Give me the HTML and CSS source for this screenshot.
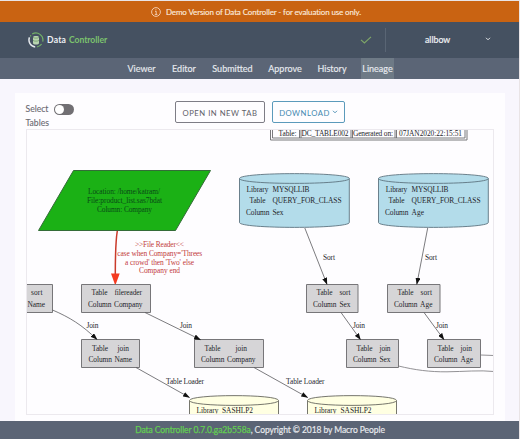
FILE: index.html
```html
<!DOCTYPE html>
<html lang="en">
<head>
<meta charset="utf-8">
<title>Data Controller</title>
<link rel="stylesheet" href="styles.css">
</head>
<body>
<div class="app">
  <div class="banner">
    <svg class="info" viewBox="0 0 10 10"><circle cx="5" cy="5" r="4.4"/><path d="M4 4.3h1.2v3M3.8 7.4h2.6M4.900 2.300v.9"/></svg>
    <span>Demo Version of Data Controller - for evaluation use only.</span>
  </div>
  <header class="header">
    <div class="brand">
      <svg class="logo" viewBox="0 0 16 16">
        <path class="ring-green" d="M4.2 2.1A7 7 0 0 1 14.7 9.7M8.9 15A7 7 0 0 0 13.6 12"/>
        <path class="ring-white" d="M1.5 5.4A7 7 0 0 0 7.2 15"/>
        <path class="ring-green" d="M2.3 4.4A7 7 0 0 1 3 3.4"/>
        <path class="db" d="M5 5.2c0-1.700 6-1.700 6 0v6c0 1.700-6 1.700-6 0z"/>
        <path class="db-lines" d="M5 5.4c1 1 5 1 6 0M5 8.4c1 1 5 1 6 0"/>
      </svg>
      <span class="brand-data">Data</span><span class="brand-ctrl">Controller</span>
    </div>
    <svg class="check" viewBox="0 0 12 8"><path d="M1 3.8 4.4 7 11 .8"/></svg>
    <div class="user"><span>allbow</span><svg class="chev" viewBox="0 0 6 4"><path d="m1 .8 2 2 2-2"/></svg></div>
  </header>
  <nav class="nav">
    <a>Viewer</a><a>Editor</a><a>Submitted</a><a>Approve</a><a>History</a><a class="active">Lineage</a>
  </nav>
  <main class="main">
    <section class="card">
      <div class="toolbar">
        <div class="select"><span class="select-label">Select Tables</span><span class="toggle"></span></div>
        <button class="btn">OPEN IN NEW TAB</button>
        <button class="btn btn-blue">DOWNLOAD<svg class="chev" viewBox="0 0 6 4"><path d="m1 .8 2 2 2-2"/></svg></button>
      </div>
      <div class="graph">
        <svg viewBox="27 130 468 284" width="468" height="284">
          <defs>
            <marker id="arrow" viewBox="0 0 7 5" refX="6.5" refY="2.5" markerWidth="7" markerHeight="5" markerUnits="userSpaceOnUse" orient="auto"><path d="M0 0 7 2.5 0 5z"/></marker>
          </defs>
          <g class="legend">
            <path d="M270.500 128V140H467V128M272.500 128V138H465V128"/>
            <path d="M299.500 128V138M301 128V138M351 128V138M352.500 128V138M395 128V138M396.500 128V138"/>
          </g>
          <text x="278.500" y="135.500" textLength="18">Table:</text>
          <text x="301.500" y="135.500" textLength="47">DC_TABLE002</text>
          <text x="353" y="135.500" textLength="40">Generated on:</text>
          <text x="399" y="135.500" textLength="63">07JAN2020:22:15:51</text>

          <path class="file" d="M73.500 170.500H210.500L175.500 230.500H38.500z"/>
          <g class="mid on-green">
            <text x="124" y="194.300" textLength="72">Location: /home/katram/</text>
            <text x="124.500" y="203.300" textLength="75">File:product_list.sas7bdat</text>
            <text x="124.500" y="212" textLength="55">Column: Company</text>
          </g>
          <path class="red-edge" d="M117.300 231C115.300 243 115.300 260 115.300 275"/>
          <path class="red-head" d="M111 273.500H119.700L115.300 285.500z"/>
          <g class="mid red">
            <text x="159.500" y="247" textLength="49">&gt;&gt;File Reader&lt;&lt;</text>
            <text x="159.700" y="255.700" textLength="85">case when Company='Threes</text>
            <text x="159.500" y="264.500" textLength="69">a crowd' then 'Two' else</text>
            <text x="159.500" y="273.200" textLength="41">Company end</text>
          </g>

          <g class="cyl">
            <path d="M239.500 178.500C239.500 172 349.300 172 349.300 178.500V222.500C349.300 229 239.500 229 239.500 222.500z"/>
            <path d="M239.500 178.500C239.500 185 349.300 185 349.300 178.500"/>
            <path d="M378.500 178.500C378.500 172 488.300 172 488.300 178.500V222.500C488.300 229 378.500 229 378.500 222.500z"/>
            <path d="M378.500 178.500C378.500 185 488.300 185 488.300 178.500"/>
          </g>
          <text x="246.500" y="192" textLength="22">Library</text><text x="272.500" y="192" textLength="37">MYSQLLIB</text>
          <text x="249.500" y="203.300" textLength="16">Table</text><text x="272.500" y="203.300" textLength="69">QUERY_FOR_CLASS</text>
          <text x="246" y="214.700" textLength="23.500">Column</text><text x="272.500" y="214.700" textLength="11">Sex</text>
          <text x="385.800" y="192" textLength="21.500">Library</text><text x="411.500" y="192" textLength="37">MYSQLLIB</text>
          <text x="388.500" y="203.300" textLength="16">Table</text><text x="411.500" y="203.300" textLength="69">QUERY_FOR_CLASS</text>
          <text x="385" y="214.700" textLength="23.500">Column</text><text x="411.500" y="214.700" textLength="12.500">Age</text>

          <g class="box">
            <path d="M20 284.500H52.500V312.500H20zM81.500 284.500H150.500V312.500H81.500zM306.500 284.500H358V312.500H306.500zM387.500 284.500H440V312.500H387.500z"/>
            <path d="M81.500 339.500H139.500V367.500H81.500zM194.500 339.500H263.500V367.500H194.500zM346.500 339.500H398.500V367.500H346.500zM427.500 339.500H480.500V367.500H427.500z"/>
          </g>
          <text x="31" y="295.300" textLength="11.500">sort</text><text x="27.500" y="306.500" textLength="17.500">Name</text>
          <text x="91.500" y="295.300" textLength="16">Table</text><text x="114.500" y="295.300" textLength="27.500">filereader</text>
          <text x="88" y="306.500" textLength="23.500">Column</text><text x="114" y="306.500" textLength="28.500">Company</text>
          <text x="316.500" y="295.300" textLength="16">Table</text><text x="339.500" y="295.300" textLength="11">sort</text>
          <text x="313" y="306.500" textLength="23.500">Column</text><text x="339.500" y="306.500" textLength="11">Sex</text>
          <text x="397.500" y="295.300" textLength="16">Table</text><text x="420.500" y="295.300" textLength="11.500">sort</text>
          <text x="394" y="306.500" textLength="23.500">Column</text><text x="420" y="306.500" textLength="12.500">Age</text>

          <text x="92" y="350.500" textLength="16">Table</text><text x="117.500" y="350.500" textLength="11.500">join</text>
          <text x="88.500" y="362" textLength="23.500">Column</text><text x="114.500" y="362" textLength="17.500">Name</text>
          <text x="204.500" y="350.500" textLength="16">Table</text><text x="235.500" y="350.500" textLength="11.500">join</text>
          <text x="201" y="362" textLength="23.500">Column</text><text x="227" y="362" textLength="28.500">Company</text>
          <text x="356.500" y="350.500" textLength="16">Table</text><text x="379.500" y="350.500" textLength="11">join</text>
          <text x="353" y="362" textLength="23.500">Column</text><text x="379.500" y="362" textLength="11">Sex</text>
          <text x="437.500" y="350.500" textLength="16">Table</text><text x="460.500" y="350.500" textLength="11.500">join</text>
          <text x="434" y="362" textLength="23.500">Column</text><text x="460.500" y="362" textLength="12.500">Age</text>

          <g class="cyl yellow">
            <path d="M189.500 400.500C189.500 394 278.500 394 278.500 400.500V430H189.500z"/>
            <path d="M189.500 400.500C189.500 407 278.500 407 278.500 400.500"/>
            <path d="M307.500 400.500C307.500 394 396.500 394 396.500 400.500V430H307.500z"/>
            <path d="M307.500 400.500C307.500 407 396.500 407 396.500 400.500"/>
          </g>
          <text x="196.500" y="413.300" textLength="22">Library</text><text x="222" y="413.300" textLength="31">SASHLP2</text>
          <text x="314.500" y="413.300" textLength="22">Library</text><text x="340.500" y="413.300" textLength="31">SASHLP2</text>

          <g class="edge">
            <path d="M304.800 228 327 284.300"/>
            <path d="M427.700 228 416.800 284.300"/>
            <path d="M52.500 310C70 317.500 82 325 97 339.500"/>
            <path d="M145 312.500 200.500 339.700"/>
            <path d="M341 312.500 360.500 339.700"/>
            <path d="M424 312.500 444 339.700"/>
            <path d="M136 367.500 189.500 397.500"/>
            <path d="M254 367.500 307.700 397.500"/>
          </g>
          <path class="line" d="M398.500 366C415 370 430 372 447 371.800S480 370 494 371.500M480.500 355 494 355.500"/>
          <text x="323" y="260.200" textLength="12">Sort</text><text x="425" y="260.200" textLength="12">Sort</text>
          <text x="86.500" y="328.300" textLength="12">Join</text><text x="180" y="328.300" textLength="12">Join</text>
          <text x="353" y="328.300" textLength="12">Join</text><text x="436" y="328.300" textLength="12">Join</text>
          <text x="166" y="383.700" textLength="38">Table Loader</text><text x="286" y="383.700" textLength="38.500">Table Loader</text>
        </svg>
      </div>
    </section>
  </main>
  <footer class="footer"><span class="version">Data Controller 0.7.0.ga2b558a</span><span>, Copyright © 2018 by Macro People</span></footer>
</div>
</body>
</html>
```
FILE: styles.css
```css
* { box-sizing: border-box; }
body { margin: 0; background: #e9e4e6; font-family: Lato, sans-serif; color: #62605f; }
svg { display: block; fill: none; }
.app { width: 519px; height: 439px; padding-top: 1px; display: flex; flex-direction: column; overflow: hidden; }
.banner { height: 21px; background: #c96312; color: #fbe9dc; display: flex; align-items: center; justify-content: center; gap: 5px; font-size: 8px; letter-spacing: -.13px; padding-right: 7px; -webkit-text-stroke: .15px; }
.info { width: 10px; height: 10px; stroke: #fbe3d0; stroke-width: .8; }
.header { height: 36px; background: #455161; display: flex; align-items: center; padding-left: 28px; }
.brand { display: flex; align-items: center; width: 332px; font-size: 8.600px; }
.logo { width: 16px; height: 16px; margin-right: 3px; }
.ring-green { stroke: #72b168; stroke-width: 1.200; }
.ring-white { stroke: #e5e9ed; stroke-width: 1.500; }
.db { fill: #b8d4af; }
.db-lines { stroke: #66935f; stroke-width: .7; }
.brand-data { color: #edf0f3; font-weight: 700; width: 22px; letter-spacing: .2px; }
.brand-ctrl { color: #7cc36e; font-weight: 700; letter-spacing: -.05px; }
.check { width: 12px; height: 8px; stroke: #7fa768; stroke-width: 1.100; }
.user { flex: 1; height: 24px; margin-left: 13px; border-left: 1px solid #596574; color: #eef0f3; font-size: 8.800px; -webkit-text-stroke: .2px; display: flex; align-items: center; justify-content: space-between; padding: 0 28px 2px 39px; }
.chev { width: 6px; height: 4px; stroke: currentColor; stroke-width: .9; }
.nav { height: 21px; background: #5b6576; display: flex; padding-left: 119.500px; color: #e7eaef; font-size: 9px; -webkit-text-stroke: .15px; }
.nav a { display: flex; align-items: center; justify-content: center; width: 44px; }
.nav a:nth-child(2) { width: 41px; }
.nav a:nth-child(3) { width: 56px; }
.nav a:nth-child(4) { width: 49px; }
.nav a:nth-child(5) { width: 45px; }
.nav .active { background: #6e7a86; width: 33px; margin-left: 6.500px; }
.main { flex: 1; background: #f8f6fd; padding: 14px 14px 0 14.500px; display: flex; }
.card { flex: 1; background: #fefdff; padding: 8px 11px 0 11px; }
.toolbar { height: 28px; display: flex; align-items: flex-start; }
.select { width: 149.500px; padding-top: 1px; display: flex; align-items: flex-start; font-size: 8.600px; line-height: 14px; }
.select-label { width: 28.500px; color: #6a6870; -webkit-text-stroke: .1px; }
.toggle { width: 20px; height: 11px; margin-top: 2px; border-radius: 6px; background: #716f73; display: flex; align-items: center; padding-left: 1px; }
.toggle::before { content: ""; width: 9px; height: 9px; border-radius: 50%; background: #fff; }
.btn { width: 90px; height: 22px; padding: 2px 0 0; border: 1px solid #7e7d86; border-radius: 2px; background: #fefdff; color: #5f6068; font: 400 7.700px Lato, sans-serif; letter-spacing: .52px; white-space: nowrap; display: flex; align-items: center; justify-content: center; }
.btn-blue { width: 73px; margin-left: 7px; border-color: #5b9abb; color: #4389b0; gap: 2px; }
.btn-blue .chev { margin-top: -3px; }
.graph { width: 468.500px; height: 286px; border: 1px solid #ece9ee; overflow: hidden; }
.graph text { font: 7.400px "Liberation Serif", serif; fill: #25252b; }
.graph .mid text { text-anchor: middle; }
.graph .on-green text { fill: #084b16; }
.graph .red text { fill: #c23b3b; }
.legend path { stroke: #6c6b6e; stroke-width: .9; }
.file { fill: #1bb115; stroke: #346c38; stroke-width: 1; }
.red-edge { stroke: #ca3a2b; stroke-width: 1.500; }
.red-head { fill: #f53a20; }
.cyl path { fill: #b3dcea; stroke: #5d7480; stroke-width: .9; }
.yellow path { fill: #ffffe2; stroke: #66665d; }
.box path { fill: #d6d5d7; stroke: #777679; stroke-width: 1; }
.edge path { stroke: #5b5a5e; stroke-width: .8; marker-end: url(#arrow); }
#arrow path { fill: #111; stroke: none; }
.line { stroke: #77767a; stroke-width: .8; }
.footer { height: 18px; background: #5b6475; color: #e9ebef; display: flex; align-items: center; justify-content: center; font-size: 8.500px; letter-spacing: -.07px; white-space: pre; padding: 0 0 0 1px; -webkit-text-stroke: .15px; }
.version { color: #62cd52; -webkit-text-stroke: .25px; }
```
